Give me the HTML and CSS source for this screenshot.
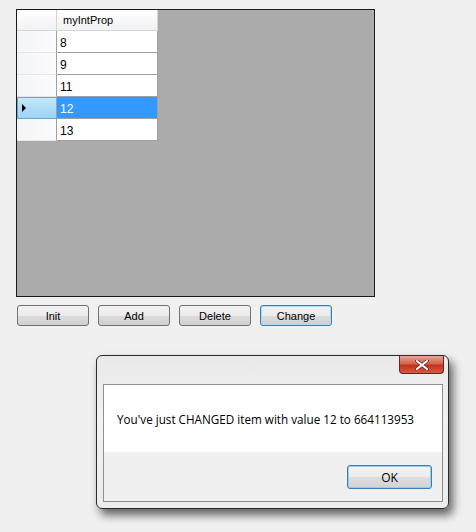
FILE: index.html
```html
<!DOCTYPE html>
<html lang="en">
<head>
    <meta charset="UTF-8">
    <title>Form1</title>
    <link rel="stylesheet" href="styles.css">
</head>
<body>

<div class="form">
    <div class="grid-view">
        <div class="grid">
            <div class="corner"></div>
            <div class="col-head">myIntProp</div>

            <div class="row-head"></div>
            <div class="cell">8</div>
            <div class="row-head"></div>
            <div class="cell">9</div>
            <div class="row-head"></div>
            <div class="cell">11</div>
            <div class="row-head current"><span class="arrow"></span></div>
            <div class="cell selected">12</div>
            <div class="row-head"></div>
            <div class="cell">13</div>
        </div>
    </div>

    <div class="buttons">
        <button class="btn">Init</button>
        <button class="btn">Add</button>
        <button class="btn">Delete</button>
        <button class="btn focused">Change</button>
    </div>
</div>

<!-- message box window -->
<div class="msgbox">
    <div class="titlebar">
        <div class="close">
            <svg width="14" height="10" viewBox="0 0 14 10">
                <path d="M2 1 L12 9 M12 1 L2 9" stroke="#5a2020" stroke-width="3.4" stroke-linecap="square"/>
                <path d="M2 1 L12 9 M12 1 L2 9" stroke="#ffffff" stroke-width="2" stroke-linecap="square"/>
            </svg>
        </div>
    </div>
    <div class="msg-body">
        <div class="msg-text">You've just CHANGED item with value 12 to 664113953</div>
        <div class="msg-footer">
            <button class="btn ok">OK</button>
        </div>
    </div>
</div>

</body>
</html>
```

FILE: styles.css
```css
body {
    margin: 0;
    background: #f0f0f0;
    font-family: "Liberation Sans", Arial, sans-serif;
    font-size: 11px;
    width: 476px;
    height: 532px;
    overflow: hidden;
}

.form {
    padding: 9px 0 0 16px;
}

.grid-view {
    width: 357px;
    height: 286px;
    border: 1px solid #1a1a1a;
    background: #ababab;
}

.grid {
    display: grid;
    grid-template-columns: 40px 101px;
    grid-template-rows: 21px repeat(5, 22px);
    width: 141px;
}

.corner,
.col-head {
    background: linear-gradient(#ffffff, #f1f2f4);
    border-right: 1px solid #d5d5d5;
    border-bottom: 1px solid #d5d5d5;
}

.col-head {
    padding: 4px 0 0 6px;
    color: #000;
}

.row-head {
    background: linear-gradient(90deg, #f4f5f7, #fbfbfc);
    border-right: 1px solid #a0a0a0;
    border-bottom: 1px solid #e6e6e6;
    position: relative;
}

.row-head.current {
    background: linear-gradient(#c6e6fb, #9ad4f6);
    border: 1px solid #6ca6c9;
    border-right-color: #a0a0a0;
}

.arrow {
    position: absolute;
    left: 4px;
    top: 6px;
    border-left: 4px solid #000;
    border-top: 4px solid transparent;
    border-bottom: 4px solid transparent;
}

.cell {
    background: #fff;
    border-bottom: 1px solid #a0a0a0;
    border-right: 1px solid #a0a0a0;
    padding: 5px 0 0 3px;
    font-size: 12px;
    color: #000;
}

.cell.selected {
    background: #3399ff;
    color: #fff;
}

.buttons {
    display: flex;
    gap: 9px;
    margin-top: 8px;
    padding-left: 1px;
}

.btn {
    width: 72px;
    height: 21px;
    border: 1px solid #707070;
    border-radius: 3px;
    background: linear-gradient(#f2f2f2 0%, #ebebeb 50%, #dddddd 51%, #cfcfcf 100%);
    font-family: "Liberation Sans", Arial, sans-serif;
    font-size: 11px;
    color: #000;
    padding: 0;
}

.btn.focused {
    border-color: #3c7fb1;
    box-shadow: inset 0 0 0 1px #a6def2;
}

.msgbox {
    position: absolute;
    left: 96px;
    top: 355px;
    width: 340px;
    height: 146px;
    padding: 0 5px 6px 6px;
    border: 1px solid #2b2b2b;
    border-radius: 6px;
    background: linear-gradient(#e9e9e9, #f2f2f2 40%, #ececec);
    box-shadow: 4px 6px 10px rgba(0, 0, 0, 0.6);
    display: flex;
    flex-direction: column;
}

.titlebar {
    height: 28px;
    display: flex;
    justify-content: flex-end;
    margin-right: -1px;
}

.close {
    width: 43px;
    height: 17px;
    border: 1px solid #5f2a24;
    border-top: none;
    border-radius: 0 0 4px 4px;
    background: linear-gradient(#e8a493 0%, #d2654e 45%, #c2321b 55%, #d9583f 100%);
    display: flex;
    align-items: center;
    justify-content: center;
}

.msg-body {
    flex: 1;
    border: 1px solid #8e8f8f;
    background: #f0f0f0;
    display: flex;
    flex-direction: column;
}

.msg-text {
    background: #fff;
    height: 67px;
    padding: 26px 0 0 13px;
    box-sizing: border-box;
    font-family: "Open Sans", "Noto Sans", sans-serif;
    font-size: 11.7px;
    color: #000;
}

.msg-footer {
    display: flex;
    justify-content: flex-end;
    padding: 13px 10px 0 0;
}

.btn.ok {
    width: 85px;
    height: 24px;
    font-family: "Open Sans", "Noto Sans", sans-serif;
    font-size: 12px;
    border-color: #3c7fb1;
    border-radius: 3px;
    box-shadow: inset 0 0 0 1px #8fd0ea;
    background: linear-gradient(#f3f3f3 0%, #ececec 50%, #dedede 51%, #d3d3d3 100%);
}
```
